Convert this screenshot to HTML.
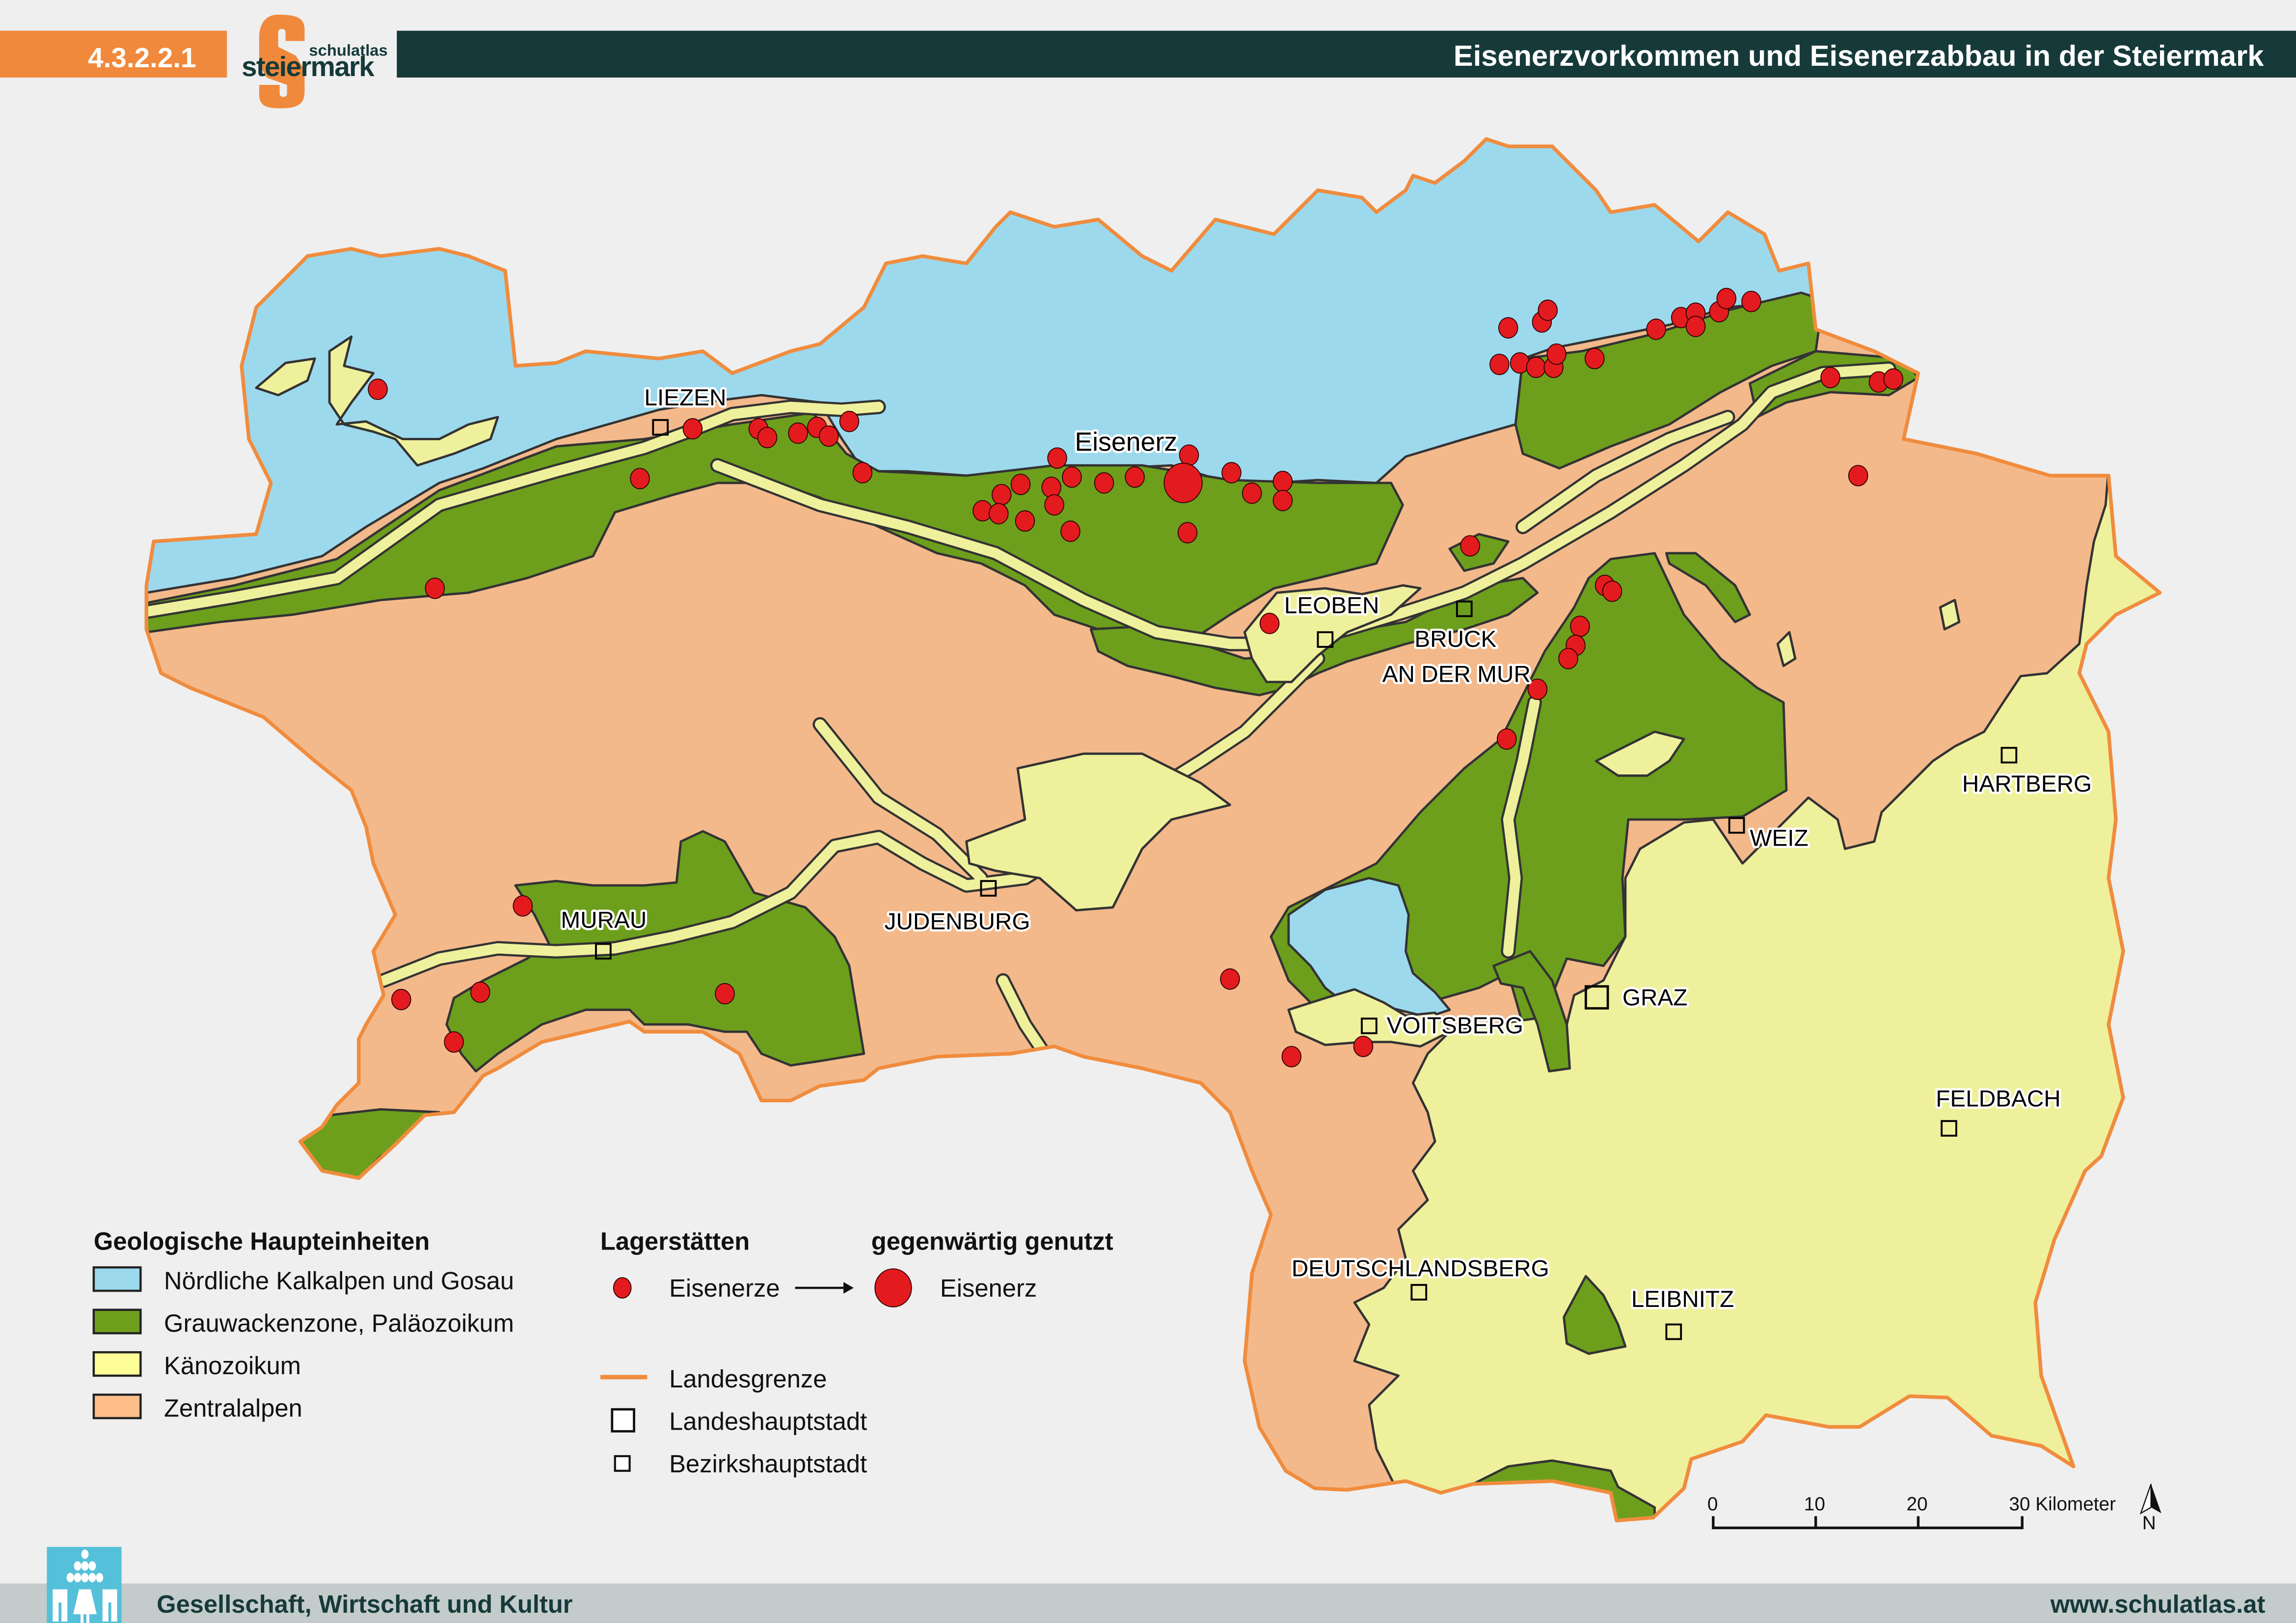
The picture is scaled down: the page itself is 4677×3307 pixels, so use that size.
<!DOCTYPE html>
<html><head><meta charset="utf-8">
<style>
html,body{margin:0;padding:0;background:#efefef;}
svg{display:block;}
.n{font-family:"Liberation Sans Narrow","Liberation Sans",sans-serif;}
.lbl{font-family:"Liberation Sans Narrow","Liberation Sans",sans-serif;font-size:16px;fill:#000;stroke:#fff;stroke-width:3px;paint-order:stroke;stroke-linejoin:round;}
.geo{stroke:#333;stroke-width:1.6;stroke-linejoin:round;}
.dot{fill:#e31b1f;stroke:#2a0000;stroke-width:0.6;}
.sq{fill:none;stroke:#000;stroke-width:1.3;}
</style></head><body>
<svg width="4677" height="3307" viewBox="0 0 1568 1109" preserveAspectRatio="none" xmlns="http://www.w3.org/2000/svg">
<rect width="1568" height="1109" fill="#efefef"/>
<defs>
<clipPath id="st"><path id="stp" d="M100,400 L105,370 L175,365 L185,330 L170,300 L165,250 L175,210 L210,175 L240,170 L260,175 L300,170 L320,175 L345,185 L352,250 L380,248 L400,240 L450,245 L480,240 L500,255 L540,240 L560,235 L590,210 L605,180 L630,175 L660,180 L680,155 L690,145 L720,155 L750,150 L780,175 L800,185 L830,150 L870,160 L890,140 L900,130 L930,135 L940,145 L960,130 L965,120 L980,125 L1000,110 L1015,95 L1030,100 L1060,100 L1075,115 L1090,130 L1100,145 L1130,140 L1160,165 L1180,145 L1205,160 L1215,185 L1235,180 L1240,225 L1280,240 L1310,255 L1300,300 L1350,310 L1400,325 L1440,325 L1445,380 L1475,405 L1445,420 L1425,440 L1420,460 L1440,500 L1445,560 L1440,600 L1450,650 L1440,700 L1450,750 L1435,790 L1424,800 L1403,847 L1390,890 L1394,940 L1416,1002 L1394,988 L1360,981 L1330,955 L1304,954 L1270,975 L1249,975 L1206,967 L1190,985 L1155,997 L1150,1017 L1129,1037 L1104,1039 L1100,1020 L1060,1012 L1006,1014 L984,1020 L960,1012 L920,1018 L898,1017 L878,1005 L860,975 L850,930 L855,870 L868,830 L855,800 L840,760 L820,740 L780,730 L740,722 L720,715 L690,720 L640,722 L600,730 L590,738 L560,742 L540,752 L520,752 L505,720 L480,705 L440,705 L430,698 L400,705 L370,712 L340,730 L330,735 L310,760 L290,762 L270,782 L245,805 L220,800 L205,780 L220,770 L230,755 L245,740 L245,710 L250,700 L262,680 L255,650 L270,625 L255,590 L250,565 L240,540 L215,520 L180,490 L130,470 L110,460 L100,430 Z"/></clipPath>
</defs>
<use href="#stp" fill="#f3b98b"/>
<g clip-path="url(#st)">
<path class="geo" fill="#9dd9ed" d="M80,80 L1240,80 L1240,200 L1230,205 L1180,210 L1140,222 L1100,230 L1060,238 L1040,245 L1035,290 L1000,300 L960,312 L940,330 L900,328 L870,330 L840,330 L800,318 L760,320 L700,322 L660,325 L620,322 L590,322 L575,300 L560,275 L520,270 L480,275 L450,280 L380,300 L330,320 L300,330 L250,360 L220,380 L160,395 L100,405 L80,405 Z"/>
<path class="geo" fill="#6d9f1d" d="M100,412 L160,400 L230,382 L300,335 L380,305 L440,300 L500,290 L555,282 L578,310 L600,322 L660,325 L720,318 L780,318 L840,328 L900,330 L950,330 L958,345 L940,385 L900,395 L870,402 L840,420 L810,440 L780,440 L750,430 L720,420 L700,400 L670,385 L640,378 L600,360 L560,340 L530,330 L490,330 L460,338 L420,350 L405,380 L360,395 L320,405 L260,410 L200,420 L150,425 L100,432 Z"/>
<path class="geo" fill="#6d9f1d" d="M1035,290 L1040,245 L1080,240 L1130,228 L1180,212 L1230,200 L1245,205 L1240,240 L1210,250 L1175,268 L1140,290 L1100,305 L1065,320 L1040,310 Z"/>
<path class="geo" fill="#6d9f1d" d="M1195,262 L1240,240 L1300,245 L1310,258 L1290,270 L1250,268 L1220,275 L1200,285 Z"/>
<path class="geo" fill="#6d9f1d" d="M745,430 L780,428 L820,440 L850,450 L880,448 L900,440 L930,430 L960,425 L990,410 L1010,400 L1040,395 L1050,405 L1030,420 L1000,430 L960,440 L920,452 L900,460 L880,470 L860,475 L830,470 L800,462 L770,455 L750,445 Z"/>
<path class="geo" fill="#6d9f1d" d="M990,375 L1010,365 L1030,370 L1020,385 L1000,390 Z"/>
<path class="geo" fill="#6d9f1d" d="M1100,382 L1130,378 L1150,420 L1175,450 L1200,470 L1218,480 L1220,540 L1190,558 L1150,560 L1112,560 L1108,600 L1110,640 L1095,660 L1070,655 L1060,680 L1070,730 L1055,735 L1040,700 L1030,665 L1010,675 L975,685 L960,680 L955,655 L940,650 L930,665 L915,690 L895,685 L880,670 L868,640 L880,620 L900,610 L940,590 L970,555 L1000,525 L1025,505 L1040,475 L1055,445 L1075,415 L1085,395 Z"/>
<path class="geo" fill="#6d9f1d" d="M1138,378 L1158,378 L1185,400 L1195,420 L1185,425 L1165,400 L1140,385 Z"/>
<path class="geo" fill="#9dd9ed" d="M880,625 L905,608 L935,600 L955,605 L962,625 L960,650 L965,665 L980,678 L990,690 L975,695 L955,690 L935,685 L918,685 L905,675 L895,660 L880,645 Z"/>
<path class="geo" fill="#6d9f1d" d="M352,605 L380,602 L405,605 L440,605 L462,603 L465,575 L480,568 L495,575 L515,610 L550,620 L570,640 L580,660 L590,720 L560,725 L540,728 L520,720 L510,705 L495,705 L470,700 L440,700 L430,690 L400,690 L370,700 L340,720 L325,732 L315,720 L305,700 L310,682 L330,670 L360,655 L375,645 L365,625 Z"/>
<path class="geo" fill="#6d9f1d" d="M205,780 L225,762 L260,758 L300,760 L285,775 L260,790 L245,805 L220,800 Z"/>
</g>
<g clip-path="url(#st)">
<path class="geo" fill="#eff09c" d="M1440,320 L1480,320 L1480,1050 L960,1050 L955,1020 L940,990 L935,960 L955,940 L925,930 L935,905 L925,890 L945,880 L960,860 L955,840 L975,820 L965,800 L980,780 L975,760 L965,740 L975,720 L990,705 L1020,700 L1055,695 L1070,700 L1075,680 L1095,670 L1110,640 L1110,600 L1120,580 L1150,562 L1170,560 L1190,590 L1200,580 L1220,560 L1235,545 L1255,560 L1260,580 L1280,575 L1285,555 L1300,540 L1320,520 L1335,510 L1355,500 L1368,480 L1380,462 L1398,460 L1420,440 L1425,400 L1430,370 L1438,345 Z"/>
<path class="geo" fill="#6d9f1d" d="M905,695 L935,693 L940,705 L930,712 L908,713 Z"/>
<path class="geo" fill="#eff09c" d="M880,690 L905,682 L925,676 L945,685 L960,694 L980,692 L990,705 L970,715 L950,712 L930,712 L905,714 L885,705 Z"/>
<path class="geo" fill="#6d9f1d" d="M1020,660 L1045,650 L1060,670 L1070,700 L1072,730 L1058,732 L1050,700 L1040,675 L1025,672 Z"/>
<path class="geo" fill="#6d9f1d" d="M1083,872 L1095,885 L1105,905 L1110,920 L1085,925 L1070,918 L1068,900 Z"/>
<path class="geo" fill="#6d9f1d" d="M1006,1014 L1030,1002 L1060,998 L1100,1005 L1105,1016 L1130,1030 L1130,1040 L1104,1040 L1098,1020 L1060,1014 Z"/>
<g fill="none" stroke="#333" stroke-width="10" stroke-linejoin="round" stroke-linecap="round">
<path d="M100,418 L160,408 L230,395 L300,345 L380,322 L440,306 L470,295 L500,283 L540,278 L575,280 L600,278"/>
<path d="M490,318 L560,345 L620,360 L680,378 L740,410 L790,432 L840,440 L880,440 L920,430 L960,418 L1000,405 L1040,385 L1100,350 L1150,318 L1190,290 L1210,268 L1245,255 L1290,252"/>
<path d="M1040,360 L1090,325 L1140,300 L1180,285"/>
<path d="M262,670 L300,655 L340,648 L380,650 L420,648 L460,640 L500,630 L540,610 L570,578 L600,572 L630,590 L660,605 L700,600 L740,575 L780,545 L820,520 L850,500 L880,470 L900,450"/>
<path d="M560,495 L580,520 L600,545 L640,570 L670,600"/>
<path d="M1048,480 L1040,520 L1030,560 L1035,600 L1030,650"/>
<path d="M685,670 L700,700 L712,718"/>
</g>
<g fill="none" stroke="#eff09c" stroke-width="7" stroke-linejoin="round" stroke-linecap="round">
<path d="M100,418 L160,408 L230,395 L300,345 L380,322 L440,306 L470,295 L500,283 L540,278 L575,280 L600,278"/>
<path d="M490,318 L560,345 L620,360 L680,378 L740,410 L790,432 L840,440 L880,440 L920,430 L960,418 L1000,405 L1040,385 L1100,350 L1150,318 L1190,290 L1210,268 L1245,255 L1290,252"/>
<path d="M1040,360 L1090,325 L1140,300 L1180,285"/>
<path d="M262,670 L300,655 L340,648 L380,650 L420,648 L460,640 L500,630 L540,610 L570,578 L600,572 L630,590 L660,605 L700,600 L740,575 L780,545 L820,520 L850,500 L880,470 L900,450"/>
<path d="M560,495 L580,520 L600,545 L640,570 L670,600"/>
<path d="M1048,480 L1040,520 L1030,560 L1035,600 L1030,650"/>
<path d="M685,670 L700,700 L712,718"/>
</g>
<path class="geo" fill="#eff09c" d="M660,575 L700,560 L695,525 L740,515 L780,515 L820,535 L840,550 L800,560 L780,580 L770,600 L760,620 L735,622 L710,600 L680,595 L662,590 Z"/>
<path class="geo" fill="#eff09c" d="M850,432 L872,405 L905,402 L930,406 L958,400 L970,402 L950,420 L920,432 L900,448 L882,466 L865,466 L855,450 Z"/>
<path class="geo" fill="#eff09c" d="M225,240 L240,230 L235,250 L255,255 L240,275 L230,290 L250,288 L275,300 L300,300 L320,290 L340,285 L335,300 L310,310 L285,318 L270,300 L255,295 L235,290 L225,275 Z"/>
<path class="geo" fill="#eff09c" d="M175,265 L195,248 L215,245 L210,260 L190,270 Z"/>
<path class="geo" fill="#eff09c" d="M1090,520 L1110,510 L1130,500 L1150,505 L1140,520 L1125,530 L1105,530 Z"/>
<path class="geo" fill="#eff09c" d="M1214,440 L1222,432 L1226,450 L1218,455 Z"/>
<path class="geo" fill="#eff09c" d="M1325,415 L1335,410 L1338,425 L1328,430 Z"/>
</g>
<use href="#stp" fill="none" stroke="#f08c3e" stroke-width="2.5" stroke-linejoin="round"/>

<g class="dot">
<ellipse cx="258" cy="266" rx="6.5" ry="7"/><ellipse cx="473" cy="293" rx="6.5" ry="7"/><ellipse cx="518" cy="293" rx="6.5" ry="7"/><ellipse cx="524" cy="299" rx="6.5" ry="7"/><ellipse cx="545" cy="296" rx="6.5" ry="7"/><ellipse cx="558" cy="292" rx="6.5" ry="7"/><ellipse cx="566" cy="298" rx="6.5" ry="7"/><ellipse cx="580" cy="288" rx="6.5" ry="7"/><ellipse cx="589" cy="323" rx="6.5" ry="7"/><ellipse cx="437" cy="327" rx="6.5" ry="7"/><ellipse cx="297" cy="402" rx="6.5" ry="7"/>
<ellipse cx="722" cy="313" rx="6.5" ry="7"/><ellipse cx="732" cy="326" rx="6.5" ry="7"/><ellipse cx="718" cy="333" rx="6.5" ry="7"/><ellipse cx="697" cy="331" rx="6.5" ry="7"/><ellipse cx="684" cy="338" rx="6.5" ry="7"/><ellipse cx="671" cy="349" rx="6.5" ry="7"/><ellipse cx="682" cy="351" rx="6.5" ry="7"/><ellipse cx="720" cy="345" rx="6.5" ry="7"/><ellipse cx="700" cy="356" rx="6.5" ry="7"/><ellipse cx="731" cy="363" rx="6.5" ry="7"/><ellipse cx="754" cy="330" rx="6.5" ry="7"/><ellipse cx="775" cy="326" rx="6.5" ry="7"/><ellipse cx="812" cy="311" rx="6.5" ry="7"/><ellipse cx="841" cy="323" rx="6.5" ry="7"/><ellipse cx="855" cy="337" rx="6.5" ry="7"/><ellipse cx="876" cy="329" rx="6.5" ry="7"/><ellipse cx="876" cy="342" rx="6.5" ry="7"/><ellipse cx="811" cy="364" rx="6.5" ry="7"/>
<ellipse cx="1030" cy="224" rx="6.5" ry="7"/><ellipse cx="1053" cy="220" rx="6.5" ry="7"/><ellipse cx="1057" cy="212" rx="6.5" ry="7"/><ellipse cx="1024" cy="249" rx="6.5" ry="7"/><ellipse cx="1038" cy="248" rx="6.5" ry="7"/><ellipse cx="1049" cy="251" rx="6.5" ry="7"/><ellipse cx="1061" cy="251" rx="6.5" ry="7"/><ellipse cx="1063" cy="242" rx="6.5" ry="7"/><ellipse cx="1089" cy="245" rx="6.5" ry="7"/><ellipse cx="1131" cy="225" rx="6.5" ry="7"/><ellipse cx="1148" cy="217" rx="6.5" ry="7"/><ellipse cx="1158" cy="214" rx="6.5" ry="7"/><ellipse cx="1158" cy="223" rx="6.5" ry="7"/><ellipse cx="1174" cy="213" rx="6.5" ry="7"/><ellipse cx="1179" cy="204" rx="6.5" ry="7"/><ellipse cx="1196" cy="206" rx="6.5" ry="7"/><ellipse cx="1250" cy="258" rx="6.5" ry="7"/><ellipse cx="1283" cy="261" rx="6.5" ry="7"/><ellipse cx="1293" cy="259" rx="6.5" ry="7"/><ellipse cx="1269" cy="325" rx="6.5" ry="7"/>
<ellipse cx="1004" cy="373" rx="6.5" ry="7"/><ellipse cx="1096" cy="400" rx="6.5" ry="7"/><ellipse cx="1101" cy="404" rx="6.5" ry="7"/><ellipse cx="1079" cy="428" rx="6.5" ry="7"/><ellipse cx="1076" cy="441" rx="6.5" ry="7"/><ellipse cx="1071" cy="450" rx="6.5" ry="7"/><ellipse cx="1050" cy="471" rx="6.5" ry="7"/><ellipse cx="1029" cy="505" rx="6.5" ry="7"/><ellipse cx="867" cy="426" rx="6.5" ry="7"/>
<ellipse cx="357" cy="619" rx="6.5" ry="7"/><ellipse cx="274" cy="683" rx="6.5" ry="7"/><ellipse cx="328" cy="678" rx="6.5" ry="7"/><ellipse cx="310" cy="712" rx="6.5" ry="7"/><ellipse cx="495" cy="679" rx="6.5" ry="7"/><ellipse cx="840" cy="669" rx="6.5" ry="7"/><ellipse cx="882" cy="722" rx="6.5" ry="7"/><ellipse cx="931" cy="715" rx="6.5" ry="7"/>
<ellipse cx="808" cy="330" rx="13" ry="13.5"/>
</g>

<g class="sq" fill="#fff">
<rect x="446" y="287" width="10" height="10"/><rect x="900" y="432" width="10" height="10"/><rect x="995" y="411" width="10" height="10"/><rect x="1367" y="511" width="10" height="10"/><rect x="1181" y="559" width="10" height="10"/><rect x="407" y="645" width="10" height="10"/><rect x="670" y="602" width="10" height="10"/><rect x="930" y="696" width="10" height="10"/><rect x="1326" y="766" width="10" height="10"/><rect x="964" y="878" width="10" height="10"/><rect x="1138" y="905" width="10" height="10"/>
<rect x="1083" y="674" width="15" height="15" style="stroke-width:1.6"/>
</g>
<g class="lbl">
<text x="440" y="277">LIEZEN</text>
<text x="734" y="308" style="font-size:18px">Eisenerz</text>
<text x="877" y="419">LEOBEN</text>
<text x="966" y="442">BRUCK</text>
<text x="944" y="466">AN DER MUR</text>
<text x="1340" y="541">HARTBERG</text>
<text x="1195" y="578">WEIZ</text>
<text x="383" y="634">MURAU</text>
<text x="604" y="635">JUDENBURG</text>
<text x="1108" y="687">GRAZ</text>
<text x="947" y="706">VOITSBERG</text>
<text x="1322" y="756">FELDBACH</text>
<text x="882" y="872">DEUTSCHLANDSBERG</text>
<text x="1114" y="893">LEIBNITZ</text>
</g>

<rect x="0" y="21" width="155" height="32" fill="#f0893c"/>
<text x="134" y="46" text-anchor="end" class="n" style="font-size:19px;font-weight:bold;fill:#fff">4.3.2.2.1</text>
<rect x="271" y="21" width="1297" height="32" fill="#163a39"/>
<text x="1546" y="45" text-anchor="end" class="n" style="font-size:20px;font-weight:bold;fill:#fff">Eisenerzvorkommen und Eisenerzabbau in der Steiermark</text>
<path d="M190,10 C180,10 177,18 177,26 L177,44 L182,53 L196,58 L196,64 C196,67 191,67 191,64 L191,58 L177,58 L177,64 C177,72 181,74 192,74 C205,74 208,70 208,62 L208,48 L202,38 L190,32 L190,22 C190,19 195,19 195,22 L195,28 L208,28 L208,20 C208,12 202,10 190,10 Z" fill="#f0893c"/>
<text x="211" y="38" class="n" style="font-size:11px;font-weight:bold;fill:#163a39">schulatlas</text>
<text x="165" y="52" class="n" style="font-size:19px;font-weight:bold;fill:#163a39;letter-spacing:-0.6px">steiermark</text>

<g class="n" style="font-size:17px;fill:#111">
<text x="64" y="854" style="font-weight:bold">Geologische Haupteinheiten</text>
<rect x="64" y="866" width="32" height="16" fill="#9dd9ed" stroke="#222" stroke-width="1.5"/>
<rect x="64" y="895" width="32" height="16" fill="#6d9f1d" stroke="#222" stroke-width="1.5"/>
<rect x="64" y="924" width="32" height="16" fill="#fdfd98" stroke="#222" stroke-width="1.5"/>
<rect x="64" y="953" width="32" height="16" fill="#fdbe8a" stroke="#222" stroke-width="1.5"/>
<text x="112" y="881">Nördliche Kalkalpen und Gosau</text>
<text x="112" y="910">Grauwackenzone, Paläozoikum</text>
<text x="112" y="939">Känozoikum</text>
<text x="112" y="968">Zentralalpen</text>
<text x="410" y="854" style="font-weight:bold">Lagerstätten</text>
<text x="595" y="854" style="font-weight:bold">gegenwärtig genutzt</text>
<ellipse cx="425" cy="880" rx="6" ry="7" class="dot"/>
<text x="457" y="886">Eisenerze</text>
<line x1="543" y1="880" x2="578" y2="880" stroke="#111" stroke-width="1.5"/>
<path d="M576,876 L583,880 L576,884 Z" fill="#111"/>
<ellipse cx="610" cy="880" rx="12.5" ry="13" class="dot"/>
<text x="642" y="886">Eisenerz</text>
<line x1="410" y1="941" x2="442" y2="941" stroke="#f08c3e" stroke-width="3"/>
<text x="457" y="948">Landesgrenze</text>
<rect x="418" y="963" width="15" height="15" fill="#fff" stroke="#111" stroke-width="1.6"/>
<text x="457" y="977">Landeshauptstadt</text>
<rect x="420" y="995" width="10" height="10" fill="#fff" stroke="#111" stroke-width="1.4"/>
<text x="457" y="1006">Bezirkshauptstadt</text>
</g>

<g class="n" style="font-size:13px;fill:#111">
<text x="1166" y="1032">0</text><text x="1232" y="1032">10</text><text x="1302" y="1032">20</text><text x="1372" y="1032">30 Kilometer</text>
<path d="M1170,1036 L1170,1044 L1381,1044 L1381,1036 M1240,1036 L1240,1044 M1310,1036 L1310,1044" fill="none" stroke="#111" stroke-width="1.8"/>
<path d="M1469,1014 L1462,1034 L1469,1030 L1476,1034 Z" fill="#111"/>
<path d="M1469,1014 L1462,1034 L1469,1030 Z" fill="#fff" stroke="#111" stroke-width="0.8"/>
<text x="1463" y="1045" style="font-size:13px">N</text>
</g>

<rect x="0" y="1082" width="1568" height="27" fill="#c3cbcb"/>
<rect x="32" y="1057" width="51" height="52" fill="#55c0d9"/>
<g fill="#fff">
<ellipse cx="58" cy="1062" rx="2.5" ry="3.2"/>
<ellipse cx="53" cy="1070" rx="2.5" ry="3.2"/><ellipse cx="58" cy="1070" rx="2.5" ry="3.2"/><ellipse cx="63" cy="1070" rx="2.5" ry="3.2"/>
<ellipse cx="48" cy="1078" rx="2.5" ry="3.2"/><ellipse cx="53" cy="1078" rx="2.5" ry="3.2"/><ellipse cx="58" cy="1078" rx="2.5" ry="3.2"/><ellipse cx="63" cy="1078" rx="2.5" ry="3.2"/><ellipse cx="68" cy="1078" rx="2.5" ry="3.2"/>
<path d="M36,1086 L46,1086 L46,1108 L42,1108 L42,1095 L40,1095 L40,1108 L36,1108 Z"/>
<path d="M70,1086 L80,1086 L80,1108 L76,1108 L76,1095 L74,1095 L74,1108 L70,1108 Z"/>
<path d="M54,1086 L62,1086 L66,1103 L50,1103 Z M55,1103 L57,1103 L57,1109 L55,1109 Z M59,1103 L61,1103 L61,1109 L59,1109 Z"/>
</g>
<text x="107" y="1102" class="n" style="font-size:17px;font-weight:bold;fill:#163a39">Gesellschaft, Wirtschaft und Kultur</text>
<text x="1547" y="1102" text-anchor="end" class="n" style="font-size:17px;font-weight:bold;fill:#163a39">www.schulatlas.at</text>
</svg>
</body></html>
